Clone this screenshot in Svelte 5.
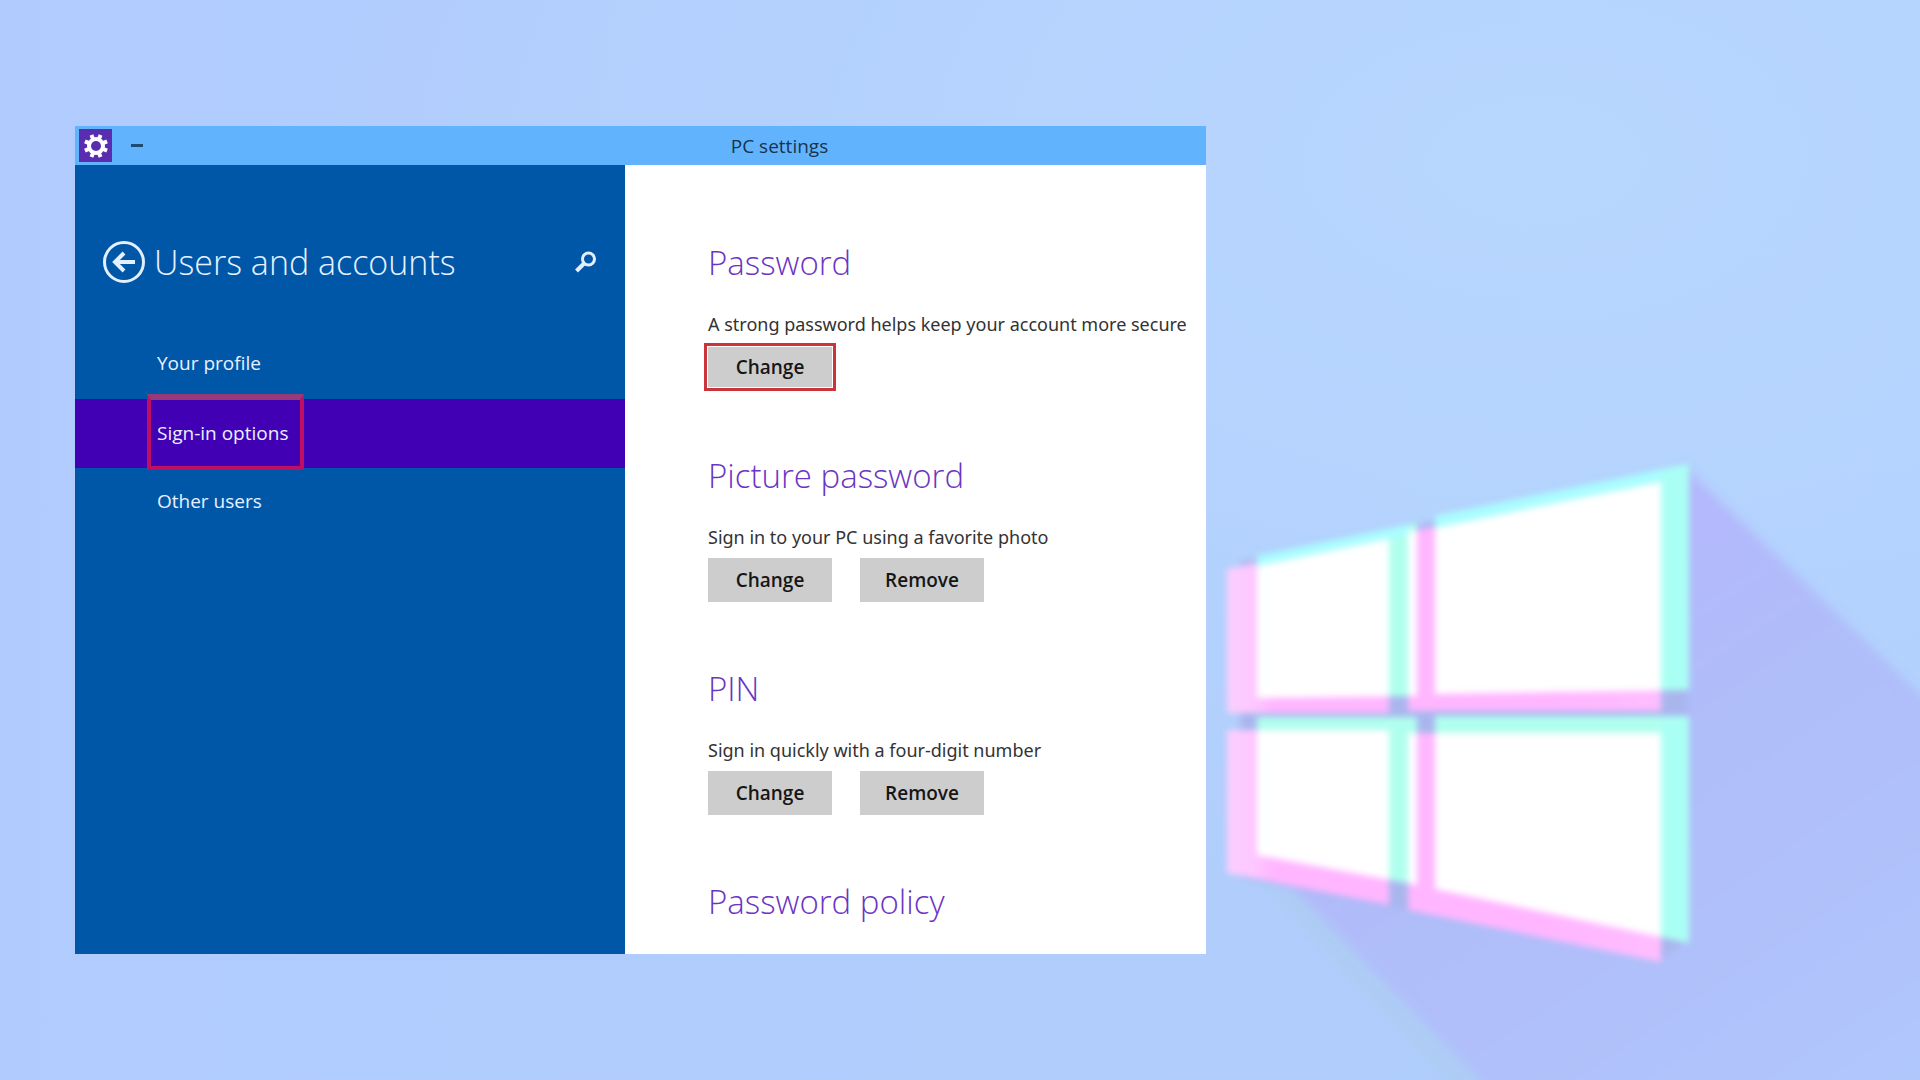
<script>
  const navItems = ['Your profile', 'Sign-in options', 'Other users'];
  let selected = $state('Sign-in options');

  const sections = [
    { title: 'Password', text: 'A strong password helps keep your account more secure', actions: ['Change'], marked: true },
    { title: 'Picture password', text: 'Sign in to your PC using a favorite photo', actions: ['Change', 'Remove'] },
    { title: 'PIN', text: 'Sign in quickly with a four-digit number', actions: ['Change', 'Remove'] },
    { title: 'Password policy', text: '', actions: [] }
  ];
</script>

<div class="desktop">
  <svg class="wallpaper" viewBox="0 0 1920 1080" preserveAspectRatio="xMaxYMid slice" aria-hidden="true">
    <defs>
      <linearGradient id="shade" gradientUnits="userSpaceOnUse" x1="1600" y1="600" x2="1920" y2="1080">
        <stop offset="0" stop-color="#b3b9fc" />
        <stop offset="0.3" stop-color="#afbdf9" />
        <stop offset="0.6" stop-color="#b0c0fa" />
        <stop offset="1" stop-color="#b0c7fc" />
      </linearGradient>
      <linearGradient id="rose" gradientUnits="userSpaceOnUse" x1="1225" y1="0" x2="1661" y2="0">
        <stop offset="0" stop-color="#fccfff" />
        <stop offset="0.07" stop-color="#fdc6ff" />
        <stop offset="0.12" stop-color="#ffb2ff" />
        <stop offset="0.5" stop-color="#ffafff" />
        <stop offset="1" stop-color="#ffbdff" />
      </linearGradient>
    </defs>
    <g class="shadow">
      <path fill="url(#shade)" d="M1686 468 1940 714V1100H1500L1292 888Z" />
      <path fill="#adccf5" d="M1260 884 1300 896 1488 1090H1452Z" />
    </g>
    <g class="logo">
      <path fill="#a9b6ee" d="M1240 562 1688 468V940L1660 960 1240 878Z" />
      <g class="light" fill="url(#rose)">
        <path d="M1227 569 1389 536V713H1227ZM1408 532 1661 482V711H1408ZM1227 730H1389V905L1227 873ZM1408 733H1661V962L1408 910Z" />
      </g>
      <g class="light">
        <path fill="#b0ffe9" d="M1257 556 1417 523V696L1257 698ZM1435 516 1689 464V690L1435 694ZM1257 717H1417V885L1257 855ZM1435 716H1689V943L1435 889Z" />
      </g>
      <path fill="#a9fdff" d="M1257 556 1407 525V535L1257 566ZM1435 516 1689 464V475L1435 528Z" />
      <path fill="#aafff4" d="M1662 470 1689 464V690H1662ZM1662 716H1689V943L1662 937Z" />
    </g>
  </svg>

  <div class="window">
    <header class="titlebar">
      <span class="app-icon">
        <svg viewBox="0 0 32 32" width="32" height="32" aria-hidden="true">
          <g fill="#fff">
            <circle cx="16" cy="16" r="9" />
            {#each [22.5, 67.5, 112.5, 157.5] as angle}
              <rect x="14" y="4" width="4" height="24" transform="rotate({angle} 16 16)" />
            {/each}
          </g>
          <circle cx="16" cy="16" r="5" fill="#5a2db0" />
        </svg>
      </span>
      <button class="minimize" aria-label="Minimize"><span></span></button>
      <span class="caption">PC settings</span>
    </header>

    <div class="body">
      <aside>
        <div class="heading">
          <button class="icon-button" aria-label="Back">
            <svg viewBox="0 0 44 44" width="44" height="44" fill="none" stroke="#e4f0ff">
              <circle cx="22" cy="22" r="19.5" stroke-width="3" />
              <path d="M33 22H14M22 13 13 22l9 9" stroke-width="4" />
            </svg>
          </button>
          <h1>Users and accounts</h1>
          <button class="icon-button" aria-label="Search">
            <svg viewBox="0 0 24 24" width="24" height="24" fill="none" stroke="#e4f0ff">
              <circle cx="14.5" cy="9" r="6" stroke-width="3" />
              <path d="M10 13.5 2.5 21" stroke-width="4" />
            </svg>
          </button>
        </div>
        <nav>
          {#each navItems as item}
            <button class="nav-item" class:active={selected === item} onclick={() => (selected = item)}>
              <span>{item}</span>
            </button>
          {/each}
        </nav>
      </aside>

      <main>
        {#each sections as section}
          <section>
            <h2>{section.title}</h2>
            {#if section.text}
              <p>{section.text}</p>
            {/if}
            {#if section.actions.length}
              <div class="actions">
                {#each section.actions as action}
                  <button class="action" class:marked={section.marked}>{action}</button>
                {/each}
              </div>
            {/if}
          </section>
        {/each}
      </main>
    </div>
  </div>
</div>

<style>
  :global(body) {
    margin: 0;
  }
  * {
    box-sizing: border-box;
  }
  .desktop {
    position: relative;
    min-height: 100vh;
    padding: 126px 75px;
    overflow: hidden;
    background:
      radial-gradient(ellipse at 80% 15%, #b8d7ff 0%, rgba(184, 215, 255, 0) 60%),
      linear-gradient(90deg, #b1cbfe, #b0cdfc 50%, #b0cffd);
    font-family: 'Open Sans', 'Noto Sans', sans-serif;
  }
  .wallpaper {
    position: absolute;
    inset: 0;
    width: 100%;
    height: 100%;
  }
  .shadow {
    filter: blur(5px);
  }
  .logo {
    isolation: isolate;
    filter: blur(3px);
  }
  .light {
    mix-blend-mode: lighten;
  }
  .window {
    position: relative;
    max-width: 1131px;
    background: #fff;
  }
  button {
    padding: 0;
    border: 0;
    border-radius: 0;
    background: none;
    font: inherit;
    color: inherit;
    cursor: pointer;
  }
  .titlebar {
    display: grid;
    grid-template-columns: 40px 36px 1fr;
    align-items: center;
    height: 39px;
    padding-left: 4px;
    background: #62b3fe;
  }
  .app-icon {
    display: flex;
    align-items: center;
    justify-content: center;
    width: 33px;
    height: 33px;
    background: #5a2db0;
  }
  .minimize {
    display: flex;
    align-items: center;
    justify-content: center;
    height: 32px;
  }
  .minimize span {
    width: 12px;
    height: 3px;
    background: #214a70;
  }
  .caption {
    justify-self: center;
    padding-left: 198px;
    font-size: 19px;
    line-height: 24px;
    color: #17344f;
  }
  .body {
    display: grid;
    grid-template-columns: 550px 1fr;
    min-height: 789px;
  }
  aside {
    background: #0057a8;
    color: #e8f1ff;
  }
  .heading {
    display: grid;
    grid-template-columns: 44px 1fr 24px;
    align-items: center;
    gap: 8px;
    padding: 73px 27px 0 27px;
  }
  .icon-button {
    display: flex;
  }
  h1,
  h2 {
    margin: 0;
    font-size: 33px;
    line-height: 48px;
    font-weight: 300;
    white-space: nowrap;
  }
  h1 {
    font-size: 34px;
  }
  h2 {
    color: #6a35c4;
  }
  nav {
    display: flex;
    flex-direction: column;
    padding-top: 44px;
  }
  .nav-item {
    display: flex;
    align-items: center;
    height: 69px;
    padding: 0 0 4px 72px;
    font-size: 19px;
    line-height: 24px;
    font-weight: 500;
    white-space: nowrap;
  }
  .nav-item span {
    display: flex;
    align-items: center;
    height: 76px;
    padding: 0 12px 0 6px;
    border: 4px solid transparent;
  }
  .nav-item.active {
    background: #4200b4;
  }
  .nav-item.active span {
    border-color: #c00f62;
    border-top: 6px solid #963a78;
  }
  main {
    padding: 74px 0 16px 83px;
  }
  section {
    padding-bottom: 63px;
  }
  section:last-child {
    padding-bottom: 0;
  }
  p {
    margin: 0;
    padding-top: 25px;
    font-family: 'Noto Sans', 'Open Sans', sans-serif;
    font-size: 18px;
    line-height: 24px;
    color: #333;
    white-space: nowrap;
  }
  .actions {
    display: flex;
    gap: 28px;
    padding-top: 9px;
  }
  .action {
    width: 124px;
    height: 44px;
    background: #cdcdcd;
    font-size: 19px;
    line-height: 24px;
    font-weight: 600;
    color: #161616;
  }
  .action.marked {
    height: 40px;
    margin: 2px 0;
    outline: 3px solid #c9353b;
    outline-offset: 1px;
  }
</style>
